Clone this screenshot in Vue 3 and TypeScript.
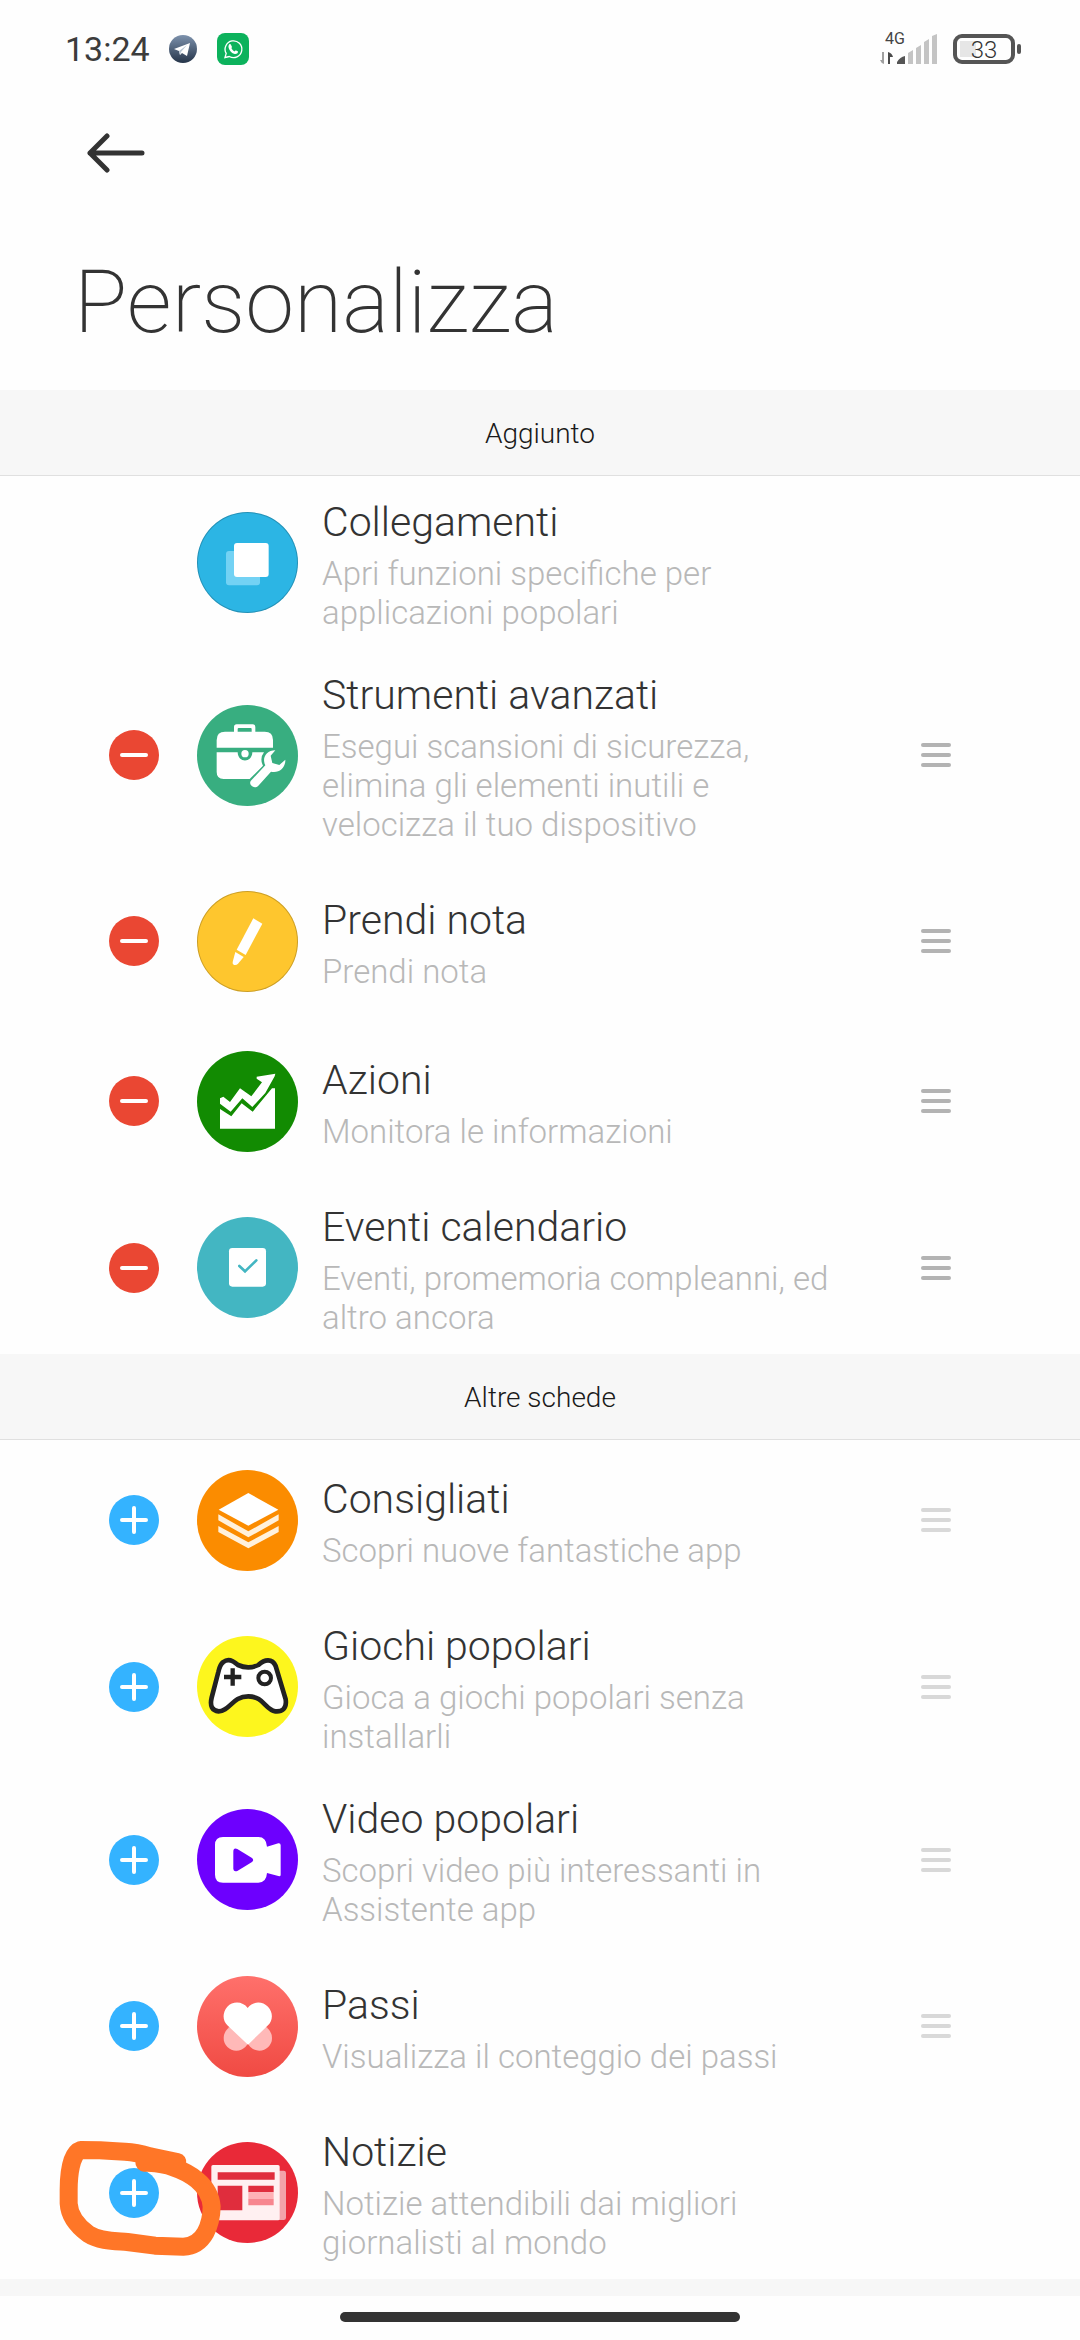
<script setup lang="ts">
import { ref } from 'vue'

interface Card {
  id: string
  title: string
  text: string
  color: string
  fixed?: boolean
}

interface Section {
  id: string
  label: string
  action: 'remove' | 'add'
  cards: Card[]
}

const sections = ref<Section[]>([
  {
    id: 'added',
    label: 'Aggiunto',
    action: 'remove',
    cards: [
      { id: 'shortcuts', title: 'Collegamenti', text: 'Apri funzioni specifiche per applicazioni popolari', color: '#2cb5e4', fixed: true },
      { id: 'tools', title: 'Strumenti avanzati', text: 'Esegui scansioni di sicurezza, elimina gli elementi inutili e velocizza il tuo dispositivo', color: '#38ae80' },
      { id: 'note', title: 'Prendi nota', text: 'Prendi nota', color: '#fec62e' },
      { id: 'stocks', title: 'Azioni', text: 'Monitora le informazioni', color: '#128b02' },
      { id: 'calendar', title: 'Eventi calendario', text: 'Eventi, promemoria compleanni, ed altro ancora', color: '#43b6c2' },
    ],
  },
  {
    id: 'other',
    label: 'Altre schede',
    action: 'add',
    cards: [
      { id: 'suggested', title: 'Consigliati', text: 'Scopri nuove fantastiche app', color: '#fb8c00' },
      { id: 'games', title: 'Giochi popolari', text: 'Gioca a giochi popolari senza installarli', color: '#fdf61e' },
      { id: 'video', title: 'Video popolari', text: 'Scopri video più interessanti in Assistente app', color: '#6d00fe' },
      { id: 'steps', title: 'Passi', text: 'Visualizza il conteggio dei passi', color: 'linear-gradient(#ff706b, #f04a43)' },
      { id: 'news', title: 'Notizie', text: 'Notizie attendibili dai migliori giornalisti al mondo', color: '#e92938' },
    ],
  },
])
</script>

<template>
  <div class="screen">
    <header class="status">
      <div class="status-left">
        <span class="clock">13:24</span>
        <svg class="telegram" viewBox="0 0 28 28" aria-hidden="true">
          <defs>
            <linearGradient id="tg" x1="0" y1="0" x2="0" y2="1">
              <stop offset="0" stop-color="#7d92ad" />
              <stop offset="1" stop-color="#253449" />
            </linearGradient>
          </defs>
          <circle cx="14" cy="14" r="14" fill="url(#tg)" />
          <path d="M5 14 21 8 18 21 13 18 11 20 10 16Z" fill="#fff" />
          <path d="M10 16 18 10 12 17 11 20Z" fill="#b9c6d4" />
        </svg>
        <svg class="whatsapp" viewBox="0 0 32 32" aria-hidden="true">
          <rect width="32" height="32" rx="8" fill="#0cb25c" />
          <path d="M8 24.500 9.200 20.400A8.400 8.400 0 1 1 12.300 23.500Z" fill="none" stroke="#fff" stroke-width="1.300" />
          <path d="M12.500 11C14 10.500 14.500 13 15 14 14 15.300 14.500 16 17.500 18.500 18.500 17 19 17.500 21 18.600 21 21 18.500 21.500 17 20.800 13.500 19.500 9.500 14 12.500 11Z" fill="#fff" />
        </svg>
      </div>
      <div class="status-right">
        <div class="network">
          <span class="network-type">4G</span>
          <svg class="signal" viewBox="0 0 58 30" aria-hidden="true">
            <path d="M0 26H2V18H4V30Q1 29 0 26Z" fill="#a0a0a0" />
            <path d="M8 18Q12 19 13 23H10V30H8Z" fill="#4a4a4a" />
            <path d="M25 22V30H17V28Q20 23 25 22Z" fill="#555" />
            <path d="M33 16V30H28V19ZM41 11V30H36V14ZM49 5V30H44V8ZM57 0V30H52V2Z" fill="#c4c4c4" />
          </svg>
        </div>
        <div class="battery"><span>33</span></div>
      </div>
    </header>

    <nav class="toolbar">
      <button class="back" type="button" aria-label="Indietro">
        <svg viewBox="0 0 58 40" aria-hidden="true">
          <path d="M20 3 3 20 20 37M3 20H55" />
        </svg>
      </button>
    </nav>
    <h1>Personalizza</h1>

    <main>
      <section v-for="section in sections" :key="section.id" :class="section.action">
        <h2>{{ section.label }}</h2>
        <ul>
          <li v-for="card in section.cards" :key="card.id">
            <button v-if="!card.fixed" type="button" class="toggle" :aria-label="(section.action === 'add' ? 'Aggiungi ' : 'Rimuovi ') + card.title">
              <svg viewBox="0 0 50 50" aria-hidden="true">
                <path :d="section.action === 'add' ? 'M13 25H37M25 13V37' : 'M13 25H37'" />
              </svg>
            </button>
            <span v-else></span>

            <svg class="icon" :class="{ outlined: card.id === 'note' || card.id === 'shortcuts' }" viewBox="0 0 303 303" :style="{ background: card.color }" aria-hidden="true">
              <g v-if="card.id === 'shortcuts'">
                <rect x="87" y="117" width="102" height="103" rx="9" fill="#73d2f4" />
                <rect x="111" y="93" width="104" height="102" rx="9" fill="#fff" />
              </g>
              <g v-else-if="card.id === 'tools'" fill="#fff">
                <path d="M111 82V66Q111 58 119 58H167Q175 58 175 66V82H164V72Q164 69 161 69H125Q122 69 122 72V82Z" />
                <path d="M59 128V105Q59 80 84 80H203Q228 80 228 105V128Z" />
                <path d="M59 142H122C123 175 165 175 166 142H201Q187 160 198 182L158 222H80Q59 222 59 201Z" />
                <circle cx="144" cy="146" r="11" />
                <path d="M235 136C207 136 194 160 205 181L161 228C154 240 172 254 184 242L222 200C246 206 266 188 265 164L247 180 226 174 221 152Z" />
              </g>
              <g v-else-if="card.id === 'note'" fill="#fff">
                <path d="M169 82 196 98 146 192 119 176Z" />
                <path d="M115 183 140 198 123 218Q117 224 110 221 106 219 107 213Z" />
              </g>
              <g v-else-if="card.id === 'stocks'" fill="#fff">
                <path d="M69 142 79 137 99 153 129 112 163 136 195 94 179 83 179 77 235 68 233 76 205 126 166 168 136 142 101 182 69 158Z" />
                <path d="M69 174 103 196 134 157 167 182 225 112H234V233H69Z" />
              </g>
              <g v-else-if="card.id === 'calendar'">
                <rect x="96" y="93" width="111" height="116" rx="10" fill="#fff" />
                <path d="M127 147 144 163 178 130" fill="none" stroke="#43b6c2" stroke-width="8" stroke-linecap="round" />
              </g>
              <g v-else-if="card.id === 'suggested'" fill="#fff">
                <path d="M154 69 244 119 154 167 65 119Z" />
                <path d="M64 133 154 184 245 133V151L154 202 64 151ZM64 168 154 217 245 168V186L154 235 64 186Z" fill="#fff1dc" />
              </g>
              <g v-else-if="card.id === 'games'" stroke="#222" fill="none">
                <path d="M79 78C92 67 108 73 123 87Q154 101 184 87C203 69 226 67 236 90L266 190C270 218 255 228 235 226 205 222 200 181 154 181 106 181 98 226 65 226 45 224 38 210 44 185L64 108Q69 85 79 78Z" fill="#fff" stroke-width="14" />
                <path d="M107 97V149M81 123H133" stroke-width="13" />
                <circle cx="203" cy="126" r="19" stroke-width="12" />
              </g>
              <g v-else-if="card.id === 'video'" fill="#fff">
                <path d="M78 84H184Q208 84 210 113L244 103Q251 102 251 109V197Q251 203 244 201L210 192Q208 221 184 221H78Q54 221 54 197V108Q54 84 78 84Z" />
                <path d="M109 128Q109 115 121 120L165 147Q172 153 165 159L121 186Q109 190 109 178Z" fill="#6d00fe" />
              </g>
              <g v-else-if="card.id === 'steps'">
                <circle cx="118" cy="186" r="38" fill="#ffb9b8" />
                <circle cx="187" cy="186" r="38" fill="#ffb9b8" />
                <path d="M152 96C167 75 196 74 213 92 230 111 227 134 213 148L153 206 91 148C77 134 75 111 91 92 108 74 138 76 152 96Z" fill="#fff" />
              </g>
              <g v-else>
                <rect x="240" y="86" width="27" height="148" rx="7" fill="#f3a3aa" />
                <rect x="43" y="69" width="205" height="166" rx="5" fill="#fff0f1" />
                <path d="M62 91H233V113H62ZM62 131H136V205H62ZM154 131H230V151H154Z" fill="#e02d3d" />
                <path d="M154 151H230V170H154Z" fill="#ffb1b6" />
                <path d="M154 170H230V190H154Z" fill="#f7868f" />
              </g>
            </svg>

            <div class="copy">
              <h3>{{ card.title }}</h3>
              <p>{{ card.text }}</p>
            </div>

            <button v-if="!card.fixed && card.id !== 'news'" type="button" class="handle" :aria-label="'Sposta ' + card.title">
              <i></i><i></i><i></i>
            </button>

            <svg v-if="card.id === 'news'" class="marker" viewBox="45 168 510 366" aria-hidden="true">
              <path d="M412 246 330 229Q290 217 255 215 215 214 180 211L122 210C92 220 86 290 86 330V370C88 410 115 440 145 462 180 485 230 483 262 486L345 497 430 500C495 497 514 430 515 380 510 310 440 275 400 262 370 250 345 250 313 248" />
            </svg>
          </li>
        </ul>
      </section>
    </main>

    <footer>
      <div class="home"></div>
    </footer>
  </div>
</template>

<style>
body {
  background: #fefefe;
}
</style>

<style scoped>
.screen {
  display: flex;
  flex-direction: column;
  min-height: 100vh;
  background: #fefefe;
  color: #333;
  font-family: Roboto, sans-serif;
}

h1, h2, h3, p, ul {
  margin: 0;
  padding: 0;
}

ul {
  list-style: none;
}

button {
  padding: 0;
  border: 0;
  background: none;
}

svg {
  display: block;
}

.status {
  display: flex;
  justify-content: space-between;
  align-items: center;
  height: 98px;
  padding: 0 59px 0 65px;
}

.status-left,
.status-right {
  display: flex;
  align-items: center;
}

.clock {
  margin-right: 19px;
  color: #3c3c3c;
  font-size: 34px;
  line-height: 40px;
}

.telegram {
  width: 28px;
  height: 28px;
  margin-right: 20px;
}

.whatsapp {
  width: 32px;
  height: 32px;
}

.network {
  position: relative;
  margin-right: 15px;
}

.signal {
  width: 58px;
  height: 30px;
}

.network-type {
  position: absolute;
  top: -5px;
  left: 5px;
  color: #444;
  font-size: 16px;
  line-height: 20px;
}

.battery {
  position: relative;
  box-sizing: border-box;
  width: 62px;
  height: 30px;
  margin-right: 6px;
  border: 4px solid #555;
  border-radius: 9px;
  background: linear-gradient(#e6e6e6, #e6e6e6) 3px 3px / 16px 16px no-repeat;
  font-size: 24px;
  font-weight: 300;
  line-height: 24px;
  text-align: center;
}

.battery::after {
  content: '';
  position: absolute;
  top: 6px;
  right: -10px;
  width: 4px;
  height: 10px;
  border-radius: 2px;
  background: #555;
}

.toolbar {
  padding: 35px 87px 0;
}

.back {
  display: block;
}

.back svg {
  width: 58px;
  height: 40px;
  fill: none;
  stroke: #333;
  stroke-width: 5;
  stroke-linecap: round;
  stroke-linejoin: round;
}

h1 {
  padding: 77px 74px 36px;
  font-size: 88px;
  font-weight: 200;
  line-height: 104px;
}

h2 {
  padding: 26px 0 24px;
  border-bottom: 1px solid #e0e0e0;
  background: #f7f7f7;
  color: #1a1a1a;
  font-size: 28px;
  font-weight: 300;
  line-height: 35px;
  text-align: center;
}

li {
  position: relative;
  display: grid;
  grid-template-columns: 50px 101px 1fr 30px;
  align-items: center;
  box-sizing: border-box;
  min-height: 160px;
  padding: 17px 129px 17px 109px;
}

.toggle {
  width: 50px;
  height: 50px;
  border-radius: 50%;
  background: #ea4733;
}

.add .toggle {
  background: #34b3ff;
}

.toggle svg {
  width: 50px;
  height: 50px;
  stroke: #fff;
  stroke-width: 4;
  stroke-linecap: round;
}

.icon {
  width: 101px;
  height: 101px;
  margin-left: 38px;
  border-radius: 50%;
}

.icon.outlined {
  box-shadow: inset 0 0 0 1px rgba(0, 0, 0, 0.2);
}

.copy {
  padding: 0 75px 0 62px;
}

h3 {
  margin-bottom: 2px;
  font-size: 41px;
  font-weight: 300;
  line-height: 59px;
}

p {
  color: #b8b8b8;
  font-size: 33px;
  font-weight: 300;
  line-height: 39px;
}

.handle {
  display: grid;
  gap: 6px;
  width: 30px;
}

.handle i {
  height: 4px;
  border-radius: 2px;
  background: #b3b3b3;
}

.add .handle {
  opacity: 0.5;
}

.marker {
  position: absolute;
  top: 30px;
  left: 55px;
  width: 170px;
  height: 122px;
  fill: none;
  stroke: #ff7627;
  stroke-width: 54;
  stroke-linecap: round;
  stroke-linejoin: round;
}

footer {
  padding: 16px 0 18px;
  border-top: 17px solid #f7f7f7;
}

.home {
  width: 37%;
  height: 10px;
  margin: 0 auto;
  border-radius: 5px;
  background: #333;
}
</style>
